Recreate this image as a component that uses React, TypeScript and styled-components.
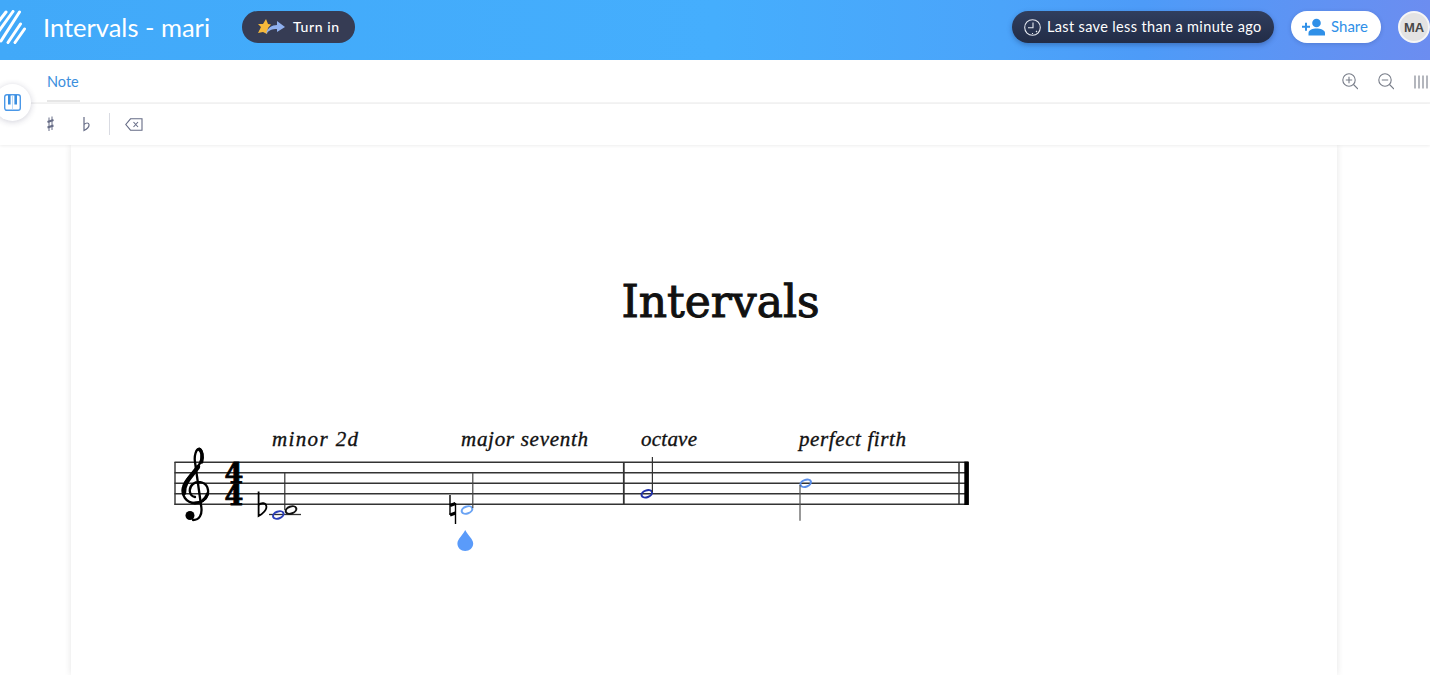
import React from "react";
import styled, { createGlobalStyle } from "styled-components";

const Global = createGlobalStyle`
  html, body { margin: 0; padding: 0; height: 675px; overflow: hidden; background: #fff; }
  * { box-sizing: border-box; }
  #root { height: 675px; font-family: Lato, "Open Sans", sans-serif; }
`;
const Page = styled.div`display: flex; flex-direction: column; height: 675px; overflow: hidden; position: relative;`;
const Header = styled.header`
  height: 60px; flex: none; display: flex; align-items: center; color: #fff; padding-bottom: 6px;
  background: linear-gradient(90deg, #41a9f9 0%, #45aefd 50%, #4ba4fa 70%, #4d9bf8 80%, #6c8df0 100%);
`;
const LogoBox = styled.div`width: 43px; flex: none; height: 34px; display: flex; align-items: center;`;
const DocTitle = styled.div`font-size: 25.5px; font-weight: 400; width: 199px; flex: none; white-space: nowrap; padding-bottom: 1px;`;
const Pill = styled.div<{ $w: number }>`
  height: 32px; width: ${p => p.$w}px; flex: none; border-radius: 16px; display: flex; align-items: center;
  font-size: 14px; white-space: nowrap;
`;
const PillLabel = styled.span`padding-bottom: 2px;`;
const TurnIn = styled(Pill)`background: #363c54; padding-left: 15px; gap: 6px; letter-spacing: 0.6px; font-weight: 500;`;
const SaveState = styled(Pill)`
  margin-left: auto; padding-left: 12px; gap: 6px; font-size: 14.5px; letter-spacing: 0.35px;
  background: linear-gradient(180deg, #303e5e, #222c46); box-shadow: 0 2px 5px rgba(20, 40, 90, .35);
`;
const ShareButton = styled(Pill)`
  margin-left: 17px; padding-left: 11px; gap: 5px; background: #fff; color: #2f90e8; font-size: 15px;
  box-shadow: 0 1px 4px rgba(20, 40, 90, .2);
`;
const Avatar = styled.div`
  margin-left: 17px; width: 32px; height: 32px; flex: none; border-radius: 50%; background: #e3e3e3;
  border: 2px solid #f6f6f6; display: flex; align-items: center; justify-content: center;
  font: 700 13px "Liberation Sans", Arial, sans-serif; color: #474747;
`;
const TabRow = styled.div`
  height: 44px; flex: none; display: flex; justify-content: space-between; padding-left: 47px;
  border-bottom: 2px solid #f4f4f4;
`;
const Tab = styled.div`
  width: 33px; height: 42px; padding-top: 13px; font-size: 14.5px; color: #3c8fdd; white-space: nowrap;
  border-bottom: 2px solid #e6e6e6;
`;
const ViewTools = styled.div`display: flex; align-items: flex-start; gap: 20px; padding-top: 13px; width: 88px; flex: none; overflow: hidden;`;
const ViewIcon = styled.svg`flex: none;`;
const ToolRow = styled.div`
  height: 41px; flex: none; display: flex; align-items: center; padding: 0 0 1px 47px; background: #fff;
  box-shadow: 0 1px 3px rgba(0, 0, 0, .07); position: relative; z-index: 2;
`;
const ToolIcon = styled.div<{ $w: number }>`width: ${p => p.$w}px; flex: none; display: flex;`;
const Divider = styled.div`width: 1px; height: 22px; background: #d9dbe2; flex: none; margin-right: 15px;`;
const PianoButton = styled.div`
  position: absolute; left: -6px; top: 84px; width: 37px; height: 37px; border-radius: 50%; z-index: 3;
  background: #fff; box-shadow: 0 1px 6px rgba(40, 40, 80, .22); display: flex; align-items: center;
  justify-content: flex-end; padding-right: 10px; padding-bottom: 1px;
`;
const Paper = styled.main`
  margin-left: 71px; width: 1266px; flex: 1; background: #fff; box-shadow: 0 0 7px rgba(0, 0, 0, .11);
  display: flex; flex-direction: column; align-items: flex-start;
`;
const ScoreTitle = styled.h1`
  margin: 122px 0 0 0; width: 100%; text-align: center; height: 70px; padding-left: 33px;
  font: 400 44px/70px "DejaVu Serif", serif; color: #111;
  -webkit-text-stroke: 1px #111;
`;
const Score = styled.svg`display: block; margin: 88px 0 0 94px; flex: none;`;

const Head = ({ x, y, c }: { x: number; y: number; c: string }) => (
  <ellipse cx={x} cy={y} rx={5.5} ry={3.4} transform={`rotate(-20 ${x} ${y})`} fill="none" stroke={c} strokeWidth={2} />
);

const labels = [
  { t: "minor 2d", x: 272, w: 86 },
  { t: "major seventh", x: 461, w: 127 },
  { t: "octave", x: 641, w: 56 },
  { t: "perfect firth", x: 799, w: 107 },
];

const App = () => (
  <Page>
    <Global />
    <Header>
      <LogoBox>
        <svg width="26" height="34" viewBox="0 0 26 34" fill="none" stroke="#fff" strokeWidth="3" strokeLinecap="round">
          <path d="M-1 11 L6 2" /><path d="M-1 21 L13 1.5" /><path d="M1 31 L19.5 2" /><path d="M8 32.5 L20.5 14" /><path d="M15 32.5 L24.5 19" />
        </svg>
      </LogoBox>
      <DocTitle>Intervals - mari</DocTitle>
      <TurnIn $w={113}>
        <svg width="30" height="18" viewBox="0 0 30 18">
          <path d="M9 1 L11 6 L14 6.5 L11 10 L10 16 L6 14 L1 15 L4 9 L1 6 L6 6 Z" fill="#f6b93b" />
          <path d="M9 16 C10 10 15 7 20 7 L20 3 L28 9 L20 14 L20 11 C15 11 12 12 9 16 Z" fill="#8fb0ee" />
        </svg>
        <PillLabel>Turn in</PillLabel>
      </TurnIn>
      <SaveState $w={262}>
        <svg width="17" height="17" viewBox="0 0 17 17" fill="none" stroke="#e6e9f0" strokeWidth="1.1">
          <circle cx="8.5" cy="8.5" r="7.8" /><path d="M9 3.5 V8.7 H4" /><path d="M12 12 L13 13M8.5 14 V15" />
        </svg>
        <PillLabel>Last save less than a minute ago</PillLabel>
      </SaveState>
      <ShareButton $w={90}>
        <svg width="24" height="18" viewBox="0 0 24 18" fill="#2f90e8">
          <path d="M0 7.8 H3 V4.8 H5 V7.8 H8 V9.8 H5 V12.8 H3 V9.8 H0 Z" />
          <circle cx="14.5" cy="5" r="4.3" />
          <path d="M6.5 17.5 V15 C6.5 12 11 10.6 14.5 10.6 C18 10.6 23 12 23 15 V17.5 Z" />
        </svg>
        <PillLabel>Share</PillLabel>
      </ShareButton>
      <Avatar>MA</Avatar>
    </Header>
    <TabRow>
      <Tab>Note</Tab>
      <ViewTools>
        <ViewIcon width="16" height="17" viewBox="0 0 16 17" fill="none" stroke="#777c88" strokeWidth="1.1">
          <circle cx="7" cy="7" r="6.2" /><path d="M11.5 11.5 L16 16M7 3.8 V10.2M3.8 7 H10.2" />
        </ViewIcon>
        <ViewIcon width="16" height="17" viewBox="0 0 16 17" fill="none" stroke="#777c88" strokeWidth="1.1">
          <circle cx="7" cy="7" r="6.2" /><path d="M11.5 11.5 L16 16M3.8 7 H10.2" />
        </ViewIcon>
        <ViewIcon width="16" height="17" viewBox="0 0 16 17" fill="none" stroke="#777c88" strokeWidth="1.1">
          <path d="M1 2.5 V15.5M5 2.5 V15.5M9 2.5 V15.5M13 2.5 V15.5" />
        </ViewIcon>
      </ViewTools>
    </TabRow>
    <ToolRow>
      <ToolIcon $w={36}>
        <svg width="7" height="16" viewBox="0 0 7 16" stroke="#666c86" fill="none">
          <path d="M2 1.5 V15M5 .5 V14" strokeWidth="1" /><path d="M.5 6 L6.5 4M.5 11.5 L6.5 9.5" strokeWidth="2" />
        </svg>
      </ToolIcon>
      <ToolIcon $w={26}>
        <svg width="7" height="16" viewBox="0 0 7 16" stroke="#666c86" fill="none" strokeWidth="1.2">
          <path d="M1 1 V14.5 C4 13 6.3 11 6 8.5 C5.7 6.5 3 6.5 1 8.5" />
        </svg>
      </ToolIcon>
      <Divider />
      <ToolIcon $w={18}>
        <svg width="18" height="13" viewBox="0 0 18 13" fill="none" stroke="#666c86" strokeWidth="1.1">
          <path d="M5.5 .8 H17 V12.2 H5.5 L.8 6.5 Z" /><path d="M8.5 4 L13 9M13 4 L8.5 9" />
        </svg>
      </ToolIcon>
    </ToolRow>
    <PianoButton>
      <svg width="17" height="17" viewBox="0 0 17 17" fill="none">
        <rect x=".7" y=".7" width="15.6" height="15.6" rx="2.2" stroke="#4a98e8" strokeWidth="1.4" />
        <path d="M4 1 H6.6 V10.5 H4ZM10.4 1 H13 V10.5 H10.4Z" fill="#3b8fe0" />
        <path d="M8.5 1 V16" stroke="#a9cff5" strokeWidth=".8" />
      </svg>
    </PianoButton>
    <Paper>
      <ScoreTitle>Intervals</ScoreTitle>
      <Score width="820" height="135" viewBox="165 425 820 135">
        <g stroke="#333" strokeWidth="1.4">
          {[462.3, 472.8, 483.3, 493.8, 504.3].map(y => <line key={y} x1="174.5" x2="968" y1={y} y2={y} />)}
          <line x1="175" x2="175" y1="462" y2="505" />
          <line x1="623.8" x2="623.8" y1="462" y2="505" strokeWidth="1.8" />
          <line x1="959" x2="959" y1="462" y2="505" strokeWidth="1.5" />
        </g>
        <rect x="964.3" y="461.6" width="4.6" height="43.4" fill="#000" />
        <g fill="none" stroke="#000" strokeLinecap="round">
          <path d="M195 497 C189 496 188 488 193 484 C198 480 207 482 208 490 C209 498 202 503 195 503 C186 503 181 495 183 487 C185 478 196 472 200 463 C203 456 202 449 199 449 C196 449 194 456 195 462 L201 505 C203 515 199 520 193 520" strokeWidth="2.3" />
          <path d="M184 493 C183 483 192 476 198 467" strokeWidth="4.4" />
          <path d="M201.5 462 C203 456 202 451 199.5 449.5" strokeWidth="3.6" />
          <path d="M207.5 494 C205 500 200 503 195 503" strokeWidth="3.2" />
        </g>
        <circle cx="190" cy="515.5" r="4.5" fill="#000" />
        <g fontFamily="'DejaVu Serif', serif" fontWeight="700" fontSize="27" fill="#000" stroke="#000" strokeWidth=".8" textAnchor="middle">
          <text x="234" y="482.5">4</text>
          <text x="234" y="504.5">4</text>
        </g>
        <path d="M258.6 491.5 V516 C263 513.5 266.7 510.5 266.4 506.5 C266 502.5 261.5 502 258.6 505" fill="none" stroke="#000" strokeWidth="1.8" />
        <line x1="269" x2="301" y1="514.5" y2="514.5" stroke="#333" strokeWidth="1.3" />
        <line x1="284.8" x2="284.8" y1="473" y2="510" stroke="#333" strokeWidth="1.2" />
        <Head x={278.3} y={515} c="#2b3fb9" />
        <Head x={291} y={510} c="#111" />
        <path d="M450 495 V515M455.5 503 V524" stroke="#000" strokeWidth="1.4" />
        <path d="M450 505.5 L455.5 503.5M450 515 L455.5 513" stroke="#000" strokeWidth="3.4" />
        <Head x={467} y={510} c="#6aa3f4" />
        <line x1="472.8" x2="472.8" y1="473" y2="508" stroke="#444" strokeWidth="1.2" />
        <path d="M465.2 530 C463 535 457.4 539 457.4 543.5 C457.4 548 461 551 465.2 551 C469.5 551 473.2 548 473.2 543.5 C473.2 539 467.5 535 465.2 530 Z" fill="#5a9bfa" />
        <Head x={646.8} y={493.8} c="#2030a8" />
        <line x1="652.4" x2="652.4" y1="457" y2="492" stroke="#333" strokeWidth="1.2" />
        <Head x={805.7} y={483.3} c="#5b8fe9" />
        <line x1="800" x2="800" y1="485" y2="520.7" stroke="#555" strokeWidth="1.2" />
        <g fontFamily="'Liberation Serif', serif" fontStyle="italic" fontSize="21" fill="#111" stroke="#111" strokeWidth=".35">
          {labels.map(l => (
            <text key={l.t} x={l.x} y="445.5" textLength={l.w} lengthAdjust="spacing">{l.t}</text>
          ))}
        </g>
      </Score>
    </Paper>
  </Page>
);

export default App;
